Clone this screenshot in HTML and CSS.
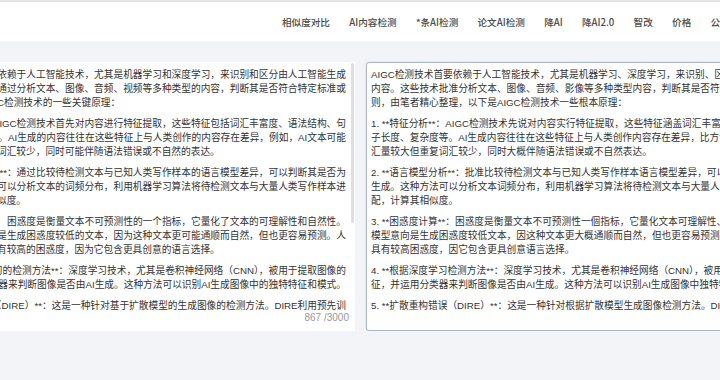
FILE: index.html
```html
<!DOCTYPE html>
<html lang="zh-CN">
<head>
<meta charset="utf-8">
<title>AIGC检测</title>
<link rel="stylesheet" href="styles.css">
</head>
<body>
<header class="nav">
  <a class="nav-item">相似度对比</a>
  <a class="nav-item">AI内容检测</a>
  <a class="nav-item">*条AI检测</a>
  <a class="nav-item">论文AI检测</a>
  <a class="nav-item">降AI</a>
  <a class="nav-item">降AI2.0</a>
  <a class="nav-item">智改</a>
  <a class="nav-item">价格</a>
  <a class="nav-item">公告</a>
</header>
<main class="work">
  <section class="panel panel-src">
    <div class="src-body">
      <div class="src-text">
        <div class="para">
          <div class="ln"><span>主要依赖于人工智能技术，尤其是机器学习和深度学习，来识别和区分由人工智能生成</span></div>
          <div class="ln"><span>这些技术通过分析文本、图像、音频、视频等多种类型的内容，判断其是否符合特定标准或</span></div>
          <div class="ln-last">C检测技术的一些关键原理：</div>
        </div>
        <div class="para">
          <div class="ln"><span>**：AIGC检测技术首先对内容进行特征提取，这些特征包括词汇丰富度、语法结构、句</span></div>
          <div class="ln"><span>杂度等。AI生成的内容往往在这些特征上与人类创作的内容存在差异，例如，AI文本可能</span></div>
          <div class="ln-last">词汇较少，同时可能伴随语法错误或不自然的表达。</div>
        </div>
        <div class="para">
          <div class="ln"><span>分析**：通过比较待检测文本与已知人类写作样本的语言模型差异，可以判断其是否为</span></div>
          <div class="ln"><span>方法可以分析文本的词频分布，利用机器学习算法将待检测文本与大量人类写作样本进</span></div>
          <div class="ln-last">似度。</div>
        </div>
        <div class="para">
          <div class="ln"><span>**：&nbsp;&nbsp;困惑度是衡量文本不可预测性的一个指标，它量化了文本的可理解性和自然性。</span></div>
          <div class="ln"><span>倾向是生成困惑度较低的文本，因为这种文本更可能通顺而自然，但也更容易预测。人</span></div>
          <div class="ln-last">有较高的困惑度，因为它包含更具创意的语言选择。</div>
        </div>
        <div class="para">
          <div class="ln"><span>学习的检测方法**：深度学习技术，尤其是卷积神经网络（CNN），被用于提取图像的</span></div>
          <div class="ln"><span>分类器来判断图像是否由AI生成。这种方法可以识别AI生成图像中的独特特征和模式。</span></div>
        </div>
        <div class="para">
          <div class="ln"><span>误（DIRE）**：这是一种针对基于扩散模型的生成图像的检测方法。DIRE利用预先训</span></div>
        </div>
      </div>
      <div class="scroll-track"><div class="scroll-thumb"></div></div>
    </div>
    <div class="counter">867 /3000</div>
  </section>
  <section class="panel panel-out">
    <p>AIGC检测技术首要依赖于人工智能技术，尤其是机器学习、深度学习，来识别、区分由人工智能生成<br>内容。这些技术批准分析文本、图像、音频、影像等多种类型内容，判断其是否符合特定<br>则，由笔者精心整理，以下是AIGC检测技术一些根本原理：</p>
    <p>1. **特征分析**：AIGC检测技术先说对内容实行特征提取，这些特征涵盖词汇丰富度、语法<br>子长度、复杂度等。AI生成内容往往在这些特征上与人类创作内容存在差异，比方说，AI<br>汇量较大但重复词汇较少，同时大概伴随语法错误或不自然表达。</p>
    <p>2. **语言模型分析**：批准比较待检测文本与已知人类写作样本语言模型差异，可以判断<br>生成。这种方法可以分析文本词频分布，利用机器学习算法将待检测文本与大量人类写作<br>配，计算其相似度。</p>
    <p>3. **困惑度计算**：困惑度是衡量文本不可预测性一個指标，它量化文本可理解性、自然<br>模型意向是生成困惑度较低文本，因这种文本更大概通顺而自然，但也更容易预测。人类<br>具有较高困惑度，因它包含更具创意语言选择。</p>
    <p>4. **根据深度学习检测方法**：深度学习技术，尤其是卷积神经网络（CNN），被用于提取<br>征，并运用分类器来判断图像是否由AI生成。这种方法可以识别AI生成图像中独特特征和</p>
    <p>5. **扩散重构错误（DIRE）**：这是一种针对根据扩散模型生成图像检测方法。DIRE利用</p>
  </section>
</main>
</body>
</html>
```
FILE: styles.css
```css
* { box-sizing: border-box; }
html, body { margin: 0; padding: 0; }
body {
  width: 720px;
  height: 380px;
  overflow: hidden;
  background: #f2f4f7;
  font-family: "Liberation Sans", "Noto Sans CJK SC", sans-serif;
  color: #333;
}
.nav {
  height: 41px;
  background: #fff;
  border-top: 2px solid #e2e3e6;
  display: flex;
  align-items: center;
  gap: 19.3px;
  padding-left: 282px;
  white-space: nowrap;
  overflow: hidden;
  font-family: "Noto Sans CJK SC", sans-serif;
  font-size: 9.6px;
  font-weight: 500;
  color: #4a4a4a;
}
.nav-item { flex: none; }
.work {
  display: flex;
  gap: 11px;
  padding-top: 21px;
  overflow: hidden;
}
.panel {
  flex: none;
  height: 269px;
  background: #fff;
  overflow: hidden;
  font-size: 9.7px;
  line-height: 14px;
  white-space: nowrap;
}
.panel p { margin: 0 0 7px; }
.panel-src {
  width: 355px;
  display: flex;
  flex-direction: column;
}
.src-body {
  flex: 1;
  display: flex;
  min-height: 0;
}
.src-text {
  flex: 1;
  min-width: 0;
  overflow: hidden;
  padding: 6px 1px 0 0;
}
.para { margin-bottom: 7px; }
.ln {
  display: flex;
  justify-content: flex-end;
  overflow: hidden;
}
.ln span { flex: none; }
.ln-last {
  margin-left: -3px;
}
.scroll-track {
  flex: none;
  width: 3px;
  margin: 1px 1px 0 4px;
}
.scroll-thumb {
  height: 160px;
  background: #dcdfe3;
  border-radius: 2px;
}
.counter {
  flex: none;
  text-align: right;
  padding: 0 6px 6px 0;
  color: #999;
  font-size: 10px;
  line-height: 14px;
}
.panel-out {
  width: 420px;
  border: 1px solid #a7b8c4;
  border-radius: 3px;
  padding: 5px 0 0 4px;
  box-shadow: 0 0 2px rgba(120, 140, 160, 0.25);
}
```
